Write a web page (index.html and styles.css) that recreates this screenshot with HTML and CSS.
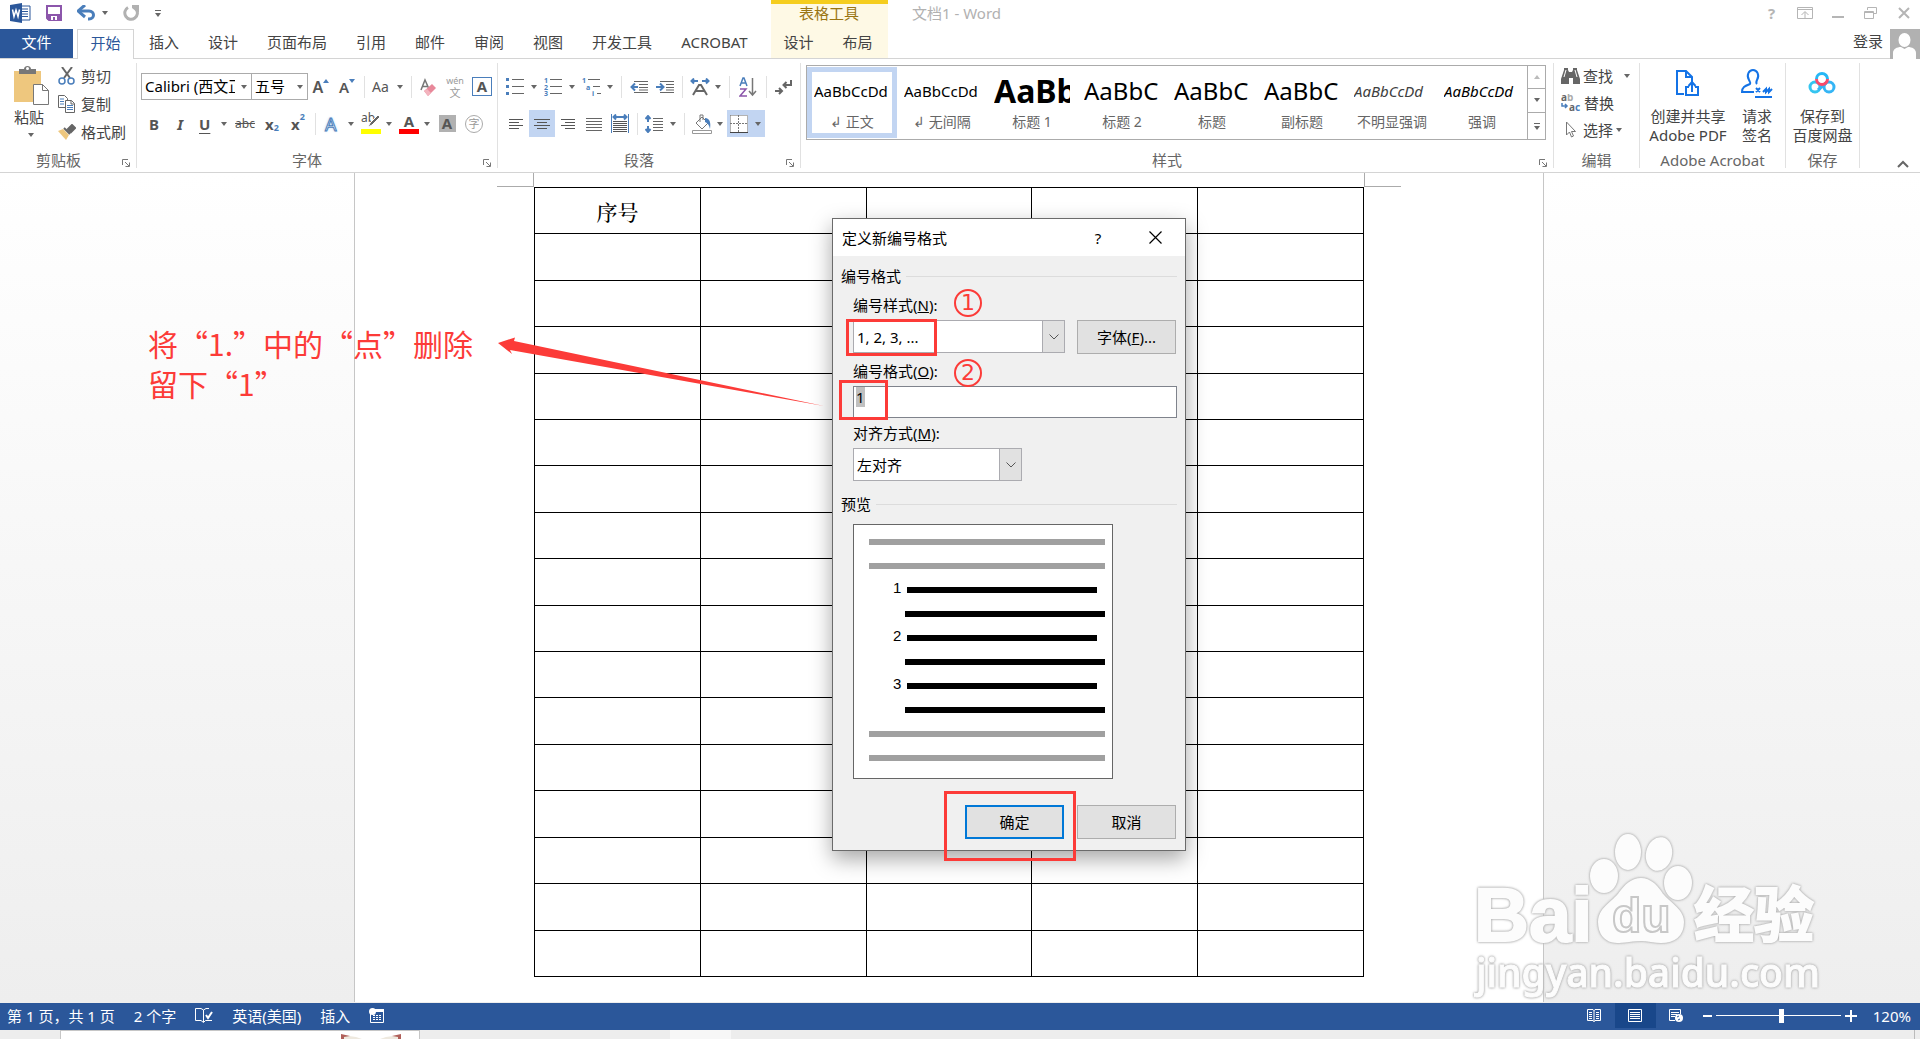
FILE: index.html
```
<!DOCTYPE html>
<html lang="zh-CN">
<head>
    <meta charset="UTF-8">
    <meta name="viewport" content="width=device-width, initial-scale=1.0">
    <link rel="stylesheet" href="styles.css">
    <title>文档1 - Word</title>
</head>
<body>
    <!-- Shared icons -->
    <svg class="defs" width="0" height="0">
        <symbol id="launcher" viewBox="0 0 8 8"><path d="M.5 6V.5H6M3 3l4 4M7.5 3.500v4h-4" fill="none" stroke="#777"/></symbol>
        <symbol id="chevron" viewBox="0 0 10 6"><path d="M.5.5L5 5 9.500.5" fill="none" stroke="#555"/></symbol>
    </svg>

    <!-- Title Bar -->
    <header class="title-bar">
        <div class="quick-access">
            <button class="quick" aria-label="Word"><svg width="21" height="20" viewBox="0 0 21 20"><path d="M9 3h11v14H9z" fill="#fff" stroke="#2b579a"/><path d="M12 6h6M12 8.500h6M12 11h6M12 13.500h6" stroke="#2b579a"/><path d="M0 2l12-2v20L0 18z" fill="#2b579a"/><path d="M2.500 6.500l1.500 7 2-6.500 2 6.500 1.500-7" fill="none" stroke="#fff" stroke-width="1.500"/></svg></button>
            <button class="quick" aria-label="保存"><svg width="16" height="16" viewBox="0 0 16 16"><path d="M1 1h14v14H3l-2-2z" fill="#fff" stroke="#8c56ab" stroke-width="2"/><path d="M1 9h14v6H1z" fill="#8c56ab"/><path d="M5 11h6v4H9v-3H7v3H5z" fill="#fff"/></svg></button>
            <button class="quick undo" aria-label="撤消"><svg width="19" height="16" viewBox="0 0 19 16"><path d="M3 6h9c6 0 6 8 0 8h-1" fill="none" stroke="#4a7ebb" stroke-width="3"/><path d="M8 0L1 6l7 6" fill="none" stroke="#4a7ebb" stroke-width="3"/></svg><i class="caret"></i></button>
            <button class="quick" aria-label="恢复"><svg width="17" height="16" viewBox="0 0 17 16"><path d="M5 2.500A6.300 6.300 0 1 0 13 4" fill="none" stroke="#b1b1b1" stroke-width="3"/><path d="M9 0h7v7h-2l-5-4z" fill="#b1b1b1"/></svg></button>
            <button class="quick more" aria-label="自定义"><i class="caret lined"></i></button>
        </div>
        <h1 class="doc-title">文档1 - Word</h1>
        <div class="window-buttons">
            <button aria-label="帮助">?</button>
            <button aria-label="功能区显示选项"><svg width="16" height="12" viewBox="0 0 16 12"><path d="M.5.5h15v11H.5zM.5 2.500h15M8 11V5M4.500 8L8 4.500 11.500 8" fill="none" stroke="#b5b5b5"/></svg></button>
            <button aria-label="最小化"><svg width="12" height="12" viewBox="0 0 12 12"><path d="M0 10h12" stroke="#b5b5b5" stroke-width="2"/></svg></button>
            <button aria-label="还原"><svg width="13" height="12" viewBox="0 0 13 12"><path d="M3.500 3V.5h9v6h-3M.5 4.500h9v7h-9zM.5 5.500h9" fill="none" stroke="#b5b5b5"/></svg></button>
            <button aria-label="关闭"><svg width="12" height="12" viewBox="0 0 12 12"><path d="M1 1l10 10M11 1L1 11" stroke="#b5b5b5" stroke-width="2"/></svg></button>
        </div>
    </header>

    <!-- Ribbon Tabs -->
    <nav class="tabs">
        <button class="tab file">文件</button>
        <button class="tab active">开始</button>
        <button class="tab">插入</button>
        <button class="tab">设计</button>
        <button class="tab">页面布局</button>
        <button class="tab">引用</button>
        <button class="tab">邮件</button>
        <button class="tab">审阅</button>
        <button class="tab">视图</button>
        <button class="tab">开发工具</button>
        <button class="tab">ACROBAT</button>
        <div class="tool-tabs">
            <span class="tool-title">表格工具</span>
            <button class="tab">设计</button>
            <button class="tab">布局</button>
        </div>
        <a class="sign-in" href="#">登录</a>
        <svg class="avatar" width="30" height="30" viewBox="0 0 30 30"><path d="M0 0h30v30H0z" fill="#b1b1b1"/><ellipse cx="14.500" cy="11" rx="6" ry="7" fill="#fff"/><path d="M3 30v-6c0-4 4-6 8-6l3.500 2 3.500-2c4 0 8 2 8 6v6z" fill="#fff"/></svg>
    </nav>

    <!-- Ribbon -->
    <div class="ribbon">
        <section class="group clipboard">
            <div class="group-body">
                <button class="paste"><svg width="36" height="40" viewBox="0 0 36 40"><path d="M0 5h27v31H0z" fill="#eec77e"/><path d="M5 8V3h5c0-4 7-4 7 0h5v5z" fill="#777"/><circle cx="13.500" cy="2.500" r="1.500" fill="#fff"/><path d="M19.500 18.500h9l6 6v14h-15z" fill="#fff" stroke="#777"/><path d="M28.500 18.500v6h6" fill="none" stroke="#777"/></svg>粘贴<i class="caret"></i></button>
                <div class="small-list">
                    <button><svg width="18" height="18" viewBox="0 0 18 18"><path d="M4 0l8 11M14 0L6 11" stroke="#666" stroke-width="2"/><circle cx="4" cy="14" r="3" fill="none" stroke="#4a7ebb" stroke-width="1.500"/><circle cx="13" cy="14" r="3" fill="none" stroke="#4a7ebb" stroke-width="1.500"/></svg>剪切</button>
                    <button><svg width="18" height="18" viewBox="0 0 18 18"><path d="M.5.5h6l3 3v9h-9z" fill="#fff" stroke="#666"/><path d="M2 4h4M2 6.500h4M2 9h4" stroke="#4a7ebb"/><path d="M7.500 5.500h6l3 3v9h-9z" fill="#fff" stroke="#666"/><path d="M13 5.500V9h3.500" fill="none" stroke="#666"/><path d="M9 10.500h6M9 12.500h6M9 14.500h6" stroke="#4a7ebb"/></svg>复制</button>
                    <button><svg width="18" height="16" viewBox="0 0 18 16"><path d="M0 7l5-2 6 6-3 5z" fill="#eec77e"/><path d="M6 4l6 6M10 5l3 3 4-4-3-3z" fill="#666" stroke="#666" stroke-width="2"/></svg>格式刷</button>
                </div>
            </div>
            <footer><span>剪贴板</span><svg class="launcher" width="8" height="8"><use href="#launcher"/></svg></footer>
        </section>

        <section class="group font">
            <div class="group-body rows">
                <div class="row">
                    <label class="combo font-name"><select aria-label="字体"><option>Calibri (西文正文)</option></select></label>
                    <label class="combo font-size"><select aria-label="字号"><option>五号</option></select></label>
                    <button class="icon"><span class="grow">A</span><svg width="6" height="16" viewBox="0 0 6 16"><path d="M0 4l3-4 3 4z" fill="#4a7ebb"/></svg></button>
                    <button class="icon"><span class="shrink">A</span><svg width="6" height="16" viewBox="0 0 6 16"><path d="M0 0h6L3 4z" fill="#4a7ebb"/></svg></button>
                    <i class="sep"></i>
                    <button class="icon drop"><span class="case">Aa</span><i class="caret"></i></button>
                    <i class="sep"></i>
                    <button class="icon"><svg width="18" height="18" viewBox="0 0 18 18"><path d="M1 12L5 2l4 9M2.500 8.500h5" fill="none" stroke="#777" stroke-width="1.500"/><path d="M4 13l8-7 4 4-8 8z" fill="#e8889a"/><path d="M4 13l3-2 4 4-3 3z" fill="#f3b4be"/></svg></button>
                    <button class="icon phonetic"><small>wén</small><span>文</span></button>
                    <button class="icon wide"><span class="boxed">A</span></button>
                </div>
                <div class="row">
                    <button class="icon"><b>B</b></button>
                    <button class="icon"><b class="italic">I</b></button>
                    <button class="icon drop"><b class="underline">U</b><i class="caret"></i></button>
                    <button class="icon wide"><s>abc</s></button>
                    <button class="icon"><b>x</b><sub>2</sub></button>
                    <button class="icon"><b>x</b><sup>2</sup></button>
                    <i class="sep"></i>
                    <button class="icon drop"><span class="effect">A</span><i class="caret"></i></button>
                    <button class="icon drop"><span class="ink highlight">ab<svg width="18" height="16" viewBox="0 0 18 16"><path d="M7 10l8-8 2 2-8 8-4 2z" fill="#666" stroke="#fff"/></svg></span><i class="caret"></i></button>
                    <button class="icon drop"><span class="ink color">A</span><i class="caret"></i></button>
                    <button class="icon"><span class="shaded">A</span></button>
                    <button class="icon wide"><span class="ring">字</span></button>
                </div>
            </div>
            <footer><span>字体</span><svg class="launcher" width="8" height="8"><use href="#launcher"/></svg></footer>
        </section>

        <section class="group paragraph">
            <div class="group-body rows">
                <div class="row">
                    <button class="icon drop"><svg width="19" height="18" viewBox="0 0 19 18"><path d="M0 0h3v3H0zM0 7h3v3H0zM0 14h3v3H0z" fill="#4a7ebb"/><path d="M6 1.500h12M6 8.500h12M6 15.500h12" stroke="#666"/></svg><i class="caret"></i></button>
                    <button class="icon drop"><svg width="19" height="18" viewBox="0 0 19 18"><g class="tiny"><text x="0" y="5">1</text><text x="0" y="12">2</text><text x="0" y="18">3</text></g><path d="M6 1.500h12M6 8.500h12M6 15.500h12" stroke="#666"/></svg><i class="caret"></i></button>
                    <button class="icon drop"><svg width="19" height="18" viewBox="0 0 19 18"><g class="tiny"><text x="0" y="5">1</text><text x="4" y="12">a</text><text x="10" y="18">i</text></g><path d="M6 1.500h12M11 8.500h7M15 15.500h4" stroke="#666"/></svg><i class="caret"></i></button>
                    <i class="sep"></i>
                    <button class="icon"><svg width="18" height="12" viewBox="0 0 18 12"><path d="M4 .5h14M9 3.500h9M9 6.500h9M4 11.500h14M9 9h9" stroke="#666"/><path d="M8 6H2M5 2.500L1.500 6 5 9.500" fill="none" stroke="#4a7ebb" stroke-width="2"/></svg></button>
                    <button class="icon"><svg width="18" height="12" viewBox="0 0 18 12"><path d="M4 .5h14M10 3.500h8M10 6.500h8M4 11.500h14M10 9h8" stroke="#666"/><path d="M0 6h7M4 2.500L7.500 6 4 9.500" fill="none" stroke="#4a7ebb" stroke-width="2"/></svg></button>
                    <i class="sep"></i>
                    <button class="icon drop"><svg width="20" height="18" viewBox="0 0 20 18"><path d="M3 17l6-10h2l6 10M6 13h8" fill="none" stroke="#666" stroke-width="2"/><path d="M8 3H2M4 .5L1.500 3 4 5.500M12 3h6M16 .5L18.500 3 16 5.500" fill="none" stroke="#4a7ebb" stroke-width="2"/></svg><i class="caret"></i></button>
                    <i class="sep"></i>
                    <button class="icon wide"><svg width="18" height="20" viewBox="0 0 18 20"><path d="M1 9l3-8h1l3 8M2 6h5" fill="none" stroke="#4a7ebb" stroke-width="1.500"/><path d="M1 12h6l-6 7h7" fill="none" stroke="#8c56ab" stroke-width="1.500"/><path d="M13.500 1v16M10 14l3.500 4 3.500-4" fill="none" stroke="#777" stroke-width="1.500"/></svg></button>
                    <i class="sep"></i>
                    <button class="icon"><svg width="18" height="16" viewBox="0 0 18 16"><path d="M16 1v5H9M11.500 3L8.500 6l3 3" fill="none" stroke="#666" stroke-width="2"/><path d="M0 12h7M4 9l3 3-3 3" fill="none" stroke="#666" stroke-width="2"/></svg></button>
                </div>
                <div class="row">
                    <button class="icon"><svg width="14" height="12" viewBox="0 0 14 12"><path d="M0 1.500h14M0 4.500h10M0 7.500h14M0 10.500h10" stroke="#555"/></svg></button>
                    <button class="icon pressed"><svg width="16" height="12" viewBox="0 0 16 12"><path d="M0 1.500h16M3 4.500h10M0 7.500h16M3 10.500h10" stroke="#555"/></svg></button>
                    <button class="icon"><svg width="14" height="12" viewBox="0 0 14 12"><path d="M0 1.500h14M4 4.500h10M0 7.500h14M4 10.500h10" stroke="#555"/></svg></button>
                    <button class="icon"><svg width="16" height="14" viewBox="0 0 16 14"><path d="M0 1.500h16M0 4.500h16M0 7.500h16M0 10.500h16M0 13.500h16" stroke="#666"/></svg></button>
                    <button class="icon"><svg width="18" height="19" viewBox="0 0 18 19"><path d="M.5 0v19M17.500 0v19" stroke="#4a7ebb"/><path d="M3 3h12M5 .5L2.500 3 5 5.500M13 .5L15.500 3 13 5.500" fill="none" stroke="#4a7ebb" stroke-width="2"/><path d="M2 7.500h14M2 9.500h14M2 11.500h14M2 13.500h14M2 15.500h14M2 17.500h14" stroke="#555"/></svg></button>
                    <i class="sep"></i>
                    <button class="icon drop"><svg width="18" height="18" viewBox="0 0 18 18"><path d="M3 2v5M3 11v5M.5 4L3 1l2.500 3M.5 14L3 17l2.500-3" fill="none" stroke="#4a7ebb" stroke-width="2"/><path d="M8 3.500h10M8 6.500h10M8 9.500h10M8 12.500h10M8 15.500h10" stroke="#666"/></svg><i class="caret"></i></button>
                    <i class="sep"></i>
                    <button class="icon drop"><svg width="20" height="20" viewBox="0 0 20 20"><path d="M4 9l6-6 6 6-6 6zM8 8V1h3v5" fill="#fff" stroke="#777"/><path d="M13 4c5 0 6 5 5 11-1-4-2-6-5-7z" fill="#4a7ebb"/><path d="M.5 16.500h19v3H.5z" fill="#fff" stroke="#999"/></svg><i class="caret"></i></button>
                    <button class="icon drop pressed"><svg width="18" height="18" viewBox="0 0 18 18"><path d="M0 0h18v18H0z" fill="#fff"/><path d="M.5.5h17v17M.5.5v17" fill="none" stroke="#666" stroke-dasharray="1 1"/><path d="M0 8.500h18M8.500 0v18" stroke="#777" stroke-dasharray="2 1"/><path d="M0 17.500h18" stroke="#444"/></svg><i class="caret"></i></button>
                </div>
            </div>
            <footer><span>段落</span><svg class="launcher" width="8" height="8"><use href="#launcher"/></svg></footer>
        </section>

        <section class="group styles">
            <div class="group-body">
                <div class="gallery">
                    <button class="style selected"><span class="sample">AaBbCcDd</span><small>↲ 正文</small></button>
                    <button class="style"><span class="sample">AaBbCcDd</span><small>↲ 无间隔</small></button>
                    <button class="style"><span class="sample heading">AaBb</span><small>标题 1</small></button>
                    <button class="style"><span class="sample large">AaBbC</span><small>标题 2</small></button>
                    <button class="style"><span class="sample large">AaBbC</span><small>标题</small></button>
                    <button class="style"><span class="sample large">AaBbC</span><small>副标题</small></button>
                    <button class="style"><span class="sample italic subtle">AaBbCcDd</span><small>不明显强调</small></button>
                    <button class="style"><span class="sample italic">AaBbCcDd</span><small>强调</small></button>
                    <div class="gallery-scroll">
                        <button aria-label="上一行"><i class="caret up"></i></button>
                        <button aria-label="下一行"><i class="caret"></i></button>
                        <button aria-label="其他"><i class="caret lined"></i></button>
                    </div>
                </div>
            </div>
            <footer><span>样式</span><svg class="launcher" width="8" height="8"><use href="#launcher"/></svg></footer>
        </section>

        <section class="group editing">
            <div class="group-body">
                <div class="small-list">
                    <button><svg width="19" height="16" viewBox="0 0 19 16"><path d="M3 2V0h4v2l1 2h3l1-2V0h4v2l3 9v5h-7v-6H8v6H0v-5z" fill="#666"/><path d="M5 2L3 9M14 2l2 7" stroke="#fff"/></svg>查找<i class="caret find"></i></button>
                    <button><svg width="20" height="18" viewBox="0 0 20 18"><g class="letters"><text x="0" y="7">a<tspan class="pale">b</tspan></text><text x="8" y="17">a<tspan class="blue">c</tspan></text></g><path d="M1 9v3h5M4 10l2 2-2 2" fill="none" stroke="#4a7ebb" stroke-width="1.500"/></svg>替换</button>
                    <button><svg width="19" height="17" viewBox="0 0 19 17"><path d="M5.500 1v13l3-3 2 5 2-1-2-4.500h4z" fill="#fff" stroke="#777"/></svg>选择<i class="caret"></i></button>
                </div>
            </div>
            <footer><span>编辑</span></footer>
        </section>

        <section class="group acrobat">
            <div class="group-body">
                <button class="big create"><svg width="26" height="30" viewBox="0 0 26 30"><path d="M9 25H2V2h9l6 6v5M11 2v6h6" fill="none" stroke="#1473e6" stroke-width="2"/><path d="M14 18h-3v8h12v-8h-3M17 23v-9M13.500 17l3.500-4 3.500 4" fill="none" stroke="#1473e6" stroke-width="2"/></svg>创建并共享<br>Adobe PDF</button>
                <button class="big"><svg width="32" height="30" viewBox="0 0 32 30"><path d="M13 23H1c0-5 3-6 8-8 1-1 0-2-1-4-3-5 0-10 4-10s7 5 4 10c-1 2-1 3 0 4" fill="none" stroke="#1473e6" stroke-width="2"/><path d="M15 19l4 4M19 19l-4 4M22 23l3-3v3l3-3v3l3-3M14 28h17" fill="none" stroke="#1473e6" stroke-width="2"/></svg>请求<br>签名</button>
            </div>
            <footer><span>Adobe Acrobat</span></footer>
        </section>

        <section class="group save">
            <div class="group-body">
                <button class="big"><svg width="28" height="30" viewBox="0 0 28 30"><circle cx="7" cy="18" r="5" fill="none" stroke="#35c5f0" stroke-width="3"/><circle cx="21" cy="18" r="5" fill="none" stroke="#35b5f5" stroke-width="3"/><path d="M10 21l8-7" stroke="#35b5f5" stroke-width="3"/><path d="M8.500 10a5.500 5.500 0 0 1 11 0" fill="none" stroke="#27b7f5" stroke-width="3"/><path d="M8.500 10a5.500 5.500 0 0 0 11 0" fill="none" stroke="#fb4b6b" stroke-width="3"/></svg>保存到<br>百度网盘</button>
            </div>
            <footer><span>保存</span></footer>
        </section>
        <button class="collapse" aria-label="折叠功能区"><svg width="12" height="8" viewBox="0 0 12 8"><path d="M1 7l5-5 5 5" fill="none" stroke="#666" stroke-width="2"/></svg></button>
    </div>

    <!-- Document -->
    <main class="workspace">
        <div class="page">
            <div class="margin-marks"><i class="mark left"></i><i class="mark right"></i></div>
            <table class="doc-table">
                <tr><th>序号</th><td></td><td></td><td></td><td></td></tr>
                <tr><td></td><td></td><td></td><td></td><td></td></tr>
                <tr><td></td><td></td><td></td><td></td><td></td></tr>
                <tr><td></td><td></td><td></td><td></td><td></td></tr>
                <tr><td></td><td></td><td></td><td></td><td></td></tr>
                <tr><td></td><td></td><td></td><td></td><td></td></tr>
                <tr><td></td><td></td><td></td><td></td><td></td></tr>
                <tr><td></td><td></td><td></td><td></td><td></td></tr>
                <tr><td></td><td></td><td></td><td></td><td></td></tr>
                <tr><td></td><td></td><td></td><td></td><td></td></tr>
                <tr><td></td><td></td><td></td><td></td><td></td></tr>
                <tr><td></td><td></td><td></td><td></td><td></td></tr>
                <tr><td></td><td></td><td></td><td></td><td></td></tr>
                <tr><td></td><td></td><td></td><td></td><td></td></tr>
                <tr><td></td><td></td><td></td><td></td><td></td></tr>
                <tr><td></td><td></td><td></td><td></td><td></td></tr>
                <tr><td></td><td></td><td></td><td></td><td></td></tr>
            </table>

            <!-- Number Format Dialog -->
            <div class="dialog" role="dialog" aria-labelledby="dialogTitle">
                <div class="dialog-header">
                    <h2 id="dialogTitle">定义新编号格式</h2>
                    <button class="dialog-help">?</button>
                    <button class="dialog-close" aria-label="关闭"><svg width="13" height="13" viewBox="0 0 13 13"><path d="M.5.5l12 12M12.500.5l-12 12" stroke="#000" stroke-width="1.200"/></svg></button>
                </div>
                <div class="dialog-content">
                    <h3>编号格式</h3>
                    <div class="fields">
                        <label for="numberStyle">编号样式(<u>N</u>):</label>
                        <div class="field-row">
                            <div class="select number-style"><select id="numberStyle"><option>1, 2, 3, ...</option></select><svg width="10" height="6"><use href="#chevron"/></svg></div>
                            <button class="dialog-button">字体(<u>F</u>)...</button>
                        </div>
                        <label for="numberFormat">编号格式(<u>O</u>):</label>
                        <input class="number-format" id="numberFormat" type="text" value="1">
                        <label for="alignment">对齐方式(<u>M</u>):</label>
                        <div class="select alignment"><select id="alignment"><option>左对齐</option></select><svg width="10" height="6"><use href="#chevron"/></svg></div>
                    </div>
                    <h3>预览</h3>
                    <div class="preview">
                        <div class="line gray"></div>
                        <div class="line gray"></div>
                        <div class="line first"><span>1</span></div>
                        <div class="line"></div>
                        <div class="line first"><span>2</span></div>
                        <div class="line"></div>
                        <div class="line first"><span>3</span></div>
                        <div class="line"></div>
                        <div class="line gray"></div>
                        <div class="line gray"></div>
                    </div>
                    <div class="dialog-footer">
                        <button class="dialog-button primary">确定</button>
                        <button class="dialog-button">取消</button>
                    </div>
                </div>
                <!-- Annotations on the dialog -->
                <span class="step one">1</span>
                <span class="step two">2</span>
                <i class="frame frame-style"></i>
                <i class="frame frame-format"></i>
                <i class="frame frame-ok"></i>
            </div>

            <p class="note">将“1.”中的“点”删除<br>留下“1”</p>
            <svg class="arrow" width="328" height="72" viewBox="0 0 328 72"><path d="M0 8L17 2.500 16 6l310 65L12 15l2 4z" fill="#fc3b38"/></svg>
        </div>

        <svg class="watermark" width="350" height="170" viewBox="0 0 350 170">
            <text class="wm-bai" x="0" y="110">Bai</text>
            <ellipse cx="130" cy="45" rx="13" ry="16"/>
            <ellipse cx="154" cy="21" rx="12" ry="17"/>
            <ellipse cx="185" cy="23" rx="12" ry="16" transform="rotate(12 185 23)"/>
            <ellipse cx="204" cy="52" rx="13" ry="16"/>
            <path d="M167 48c10 0 16 8 21 15 7 9 21 16 21 28 0 14-9 20-22 20-8 0-12-2-20-2s-16 2-24 2c-12 0-18-9-18-20 0-13 12-18 20-28 6-8 12-15 22-15z"/>
            <text class="wm-du" x="138" y="101">du</text>
            <text class="wm-exp" x="220" y="106">经验</text>
            <text class="wm-url" x="2" y="156">jingyan.baidu.com</text>
        </svg>
    </main>

    <!-- Status Bar -->
    <footer class="status-bar">
        <span>第 1 页，共 1 页</span>
        <span>2 个字</span>
        <svg width="18" height="15" viewBox="0 0 18 15"><path d="M8.500 2L6 .5H.5v12H6l2.500 2 2-2H17M8.500 2v12M8.500 2L11 .5h3" fill="none" stroke="#fff"/><path d="M11 7l2 3 4-6" fill="none" stroke="#fff" stroke-width="2"/></svg>
        <span>英语(美国)</span>
        <span>插入</span>
        <svg width="15" height="15" viewBox="0 0 15 15"><path d="M1.500 5v9.500h13v-12H7" fill="none" stroke="#fff"/><path d="M6 1h9v3H6z" fill="#fff"/><circle cx="3.500" cy="3.500" r="3.500" fill="#fff"/><path d="M4 7.500h9M4 9.500h9M4 11.500h9" stroke="#fff" stroke-dasharray="2 1"/></svg>
        <div class="views">
            <button aria-label="阅读视图"><svg width="14" height="13" viewBox="0 0 14 13"><path d="M.5.5H6l1 1 1-1h5.500v11H8l-1 1-1-1H.5zM7 1v12M2 3.500h3M2 5.500h3M2 7.500h3M2 9.500h3M9 3.500h3M9 5.500h3M9 7.500h3M9 9.500h3" fill="none" stroke="#fff"/></svg></button>
            <button class="current" aria-label="页面视图"><svg width="14" height="13" viewBox="0 0 14 13"><path d="M.5.5h13v12H.5zM2 3.500h10M2 5.500h10M2 7.500h10M2 9.500h10" fill="none" stroke="#fff"/></svg></button>
            <button aria-label="Web 版式视图"><svg width="14" height="13" viewBox="0 0 14 13"><path d="M6 11.500H.5V.5h11V5M2 3.500h8M2 5.500h6M2 7.500h4" fill="none" stroke="#fff"/><circle cx="10" cy="9" r="4" fill="#fff"/><path d="M8 8l2-1M9 11l2-1" stroke="#2b579a"/></svg></button>
        </div>
        <div class="zoom">
            <button class="minus" aria-label="缩小"></button>
            <input type="range" min="0" max="100" value="53" aria-label="缩放">
            <button class="plus" aria-label="放大"></button>
            <span>120%</span>
        </div>
    </footer>

    <!-- Taskbar edge -->
    <div class="taskbar">
        <div class="task"><svg width="62" height="7" viewBox="0 0 62 7"><path d="M2 7V1l14 2 12 4zM60 7V1L46 3 34 7z" fill="#eee9df"/><path d="M1 7V0l9 2-6 1v4zM61 7V0l-9 2 6 1v4z" fill="#b0605a"/></svg></div>
        <div class="task-light"></div>
        <time>21:57</time>
        <i class="desktop-edge"></i>
    </div>

    <script>
        // Start with the number selected so it can be typed over
        document.getElementById("numberFormat").select();
    </script>
</body>
</html>
```
FILE: styles.css
```
/* Base */
* {
    box-sizing: border-box;
}

body {
    margin: 0;
    min-height: 100vh;
    display: flex;
    flex-direction: column;
    font-family: "Noto Sans", "Noto Sans CJK SC", sans-serif;
    font-size: 15px;
    line-height: 20px;
    color: #444;
    background: #fff;
}

button,
select,
input {
    font: inherit;
    color: inherit;
    margin: 0;
    padding: 0;
    border: 0;
    border-radius: 0;
    background: none;
}

h1,
h2,
h3,
p {
    margin: 0;
    font-size: 15px;
    font-weight: normal;
}

button svg,
.status-bar svg {
    display: block;
    flex: none;
}

.defs {
    position: absolute;
}

.caret {
    flex: none;
    width: 0;
    border: 3px solid transparent;
    border-top: 4px solid #666;
    border-bottom: 0;
}

.caret.up {
    border-top: 0;
    border-bottom: 4px solid #bbb;
}

.caret.lined {
    position: relative;
}

.caret.lined::before {
    content: "";
    position: absolute;
    left: -3px;
    top: -7px;
    width: 6px;
    height: 1px;
    background: #666;
}

/* Title Bar */
.title-bar {
    display: flex;
    align-items: center;
    height: 29px;
    padding-bottom: 3px;
}

.quick-access {
    display: flex;
    align-items: center;
    gap: 15px;
    width: 912px;
    padding-left: 10px;
}

.quick {
    display: flex;
    align-items: center;
    gap: 6px;
}

.quick.more {
    padding-top: 4px;
}

.doc-title {
    color: #b1b1b1;
}

.window-buttons {
    display: flex;
    margin-left: auto;
}

.window-buttons button {
    display: flex;
    justify-content: center;
    align-items: center;
    width: 33px;
    height: 24px;
    color: #b5b5b5;
    font-weight: bold;
}

/* Tabs */
.tabs {
    display: flex;
    height: 30px;
    border-bottom: 1px solid #d4d4d4;
}

.tab {
    height: 29px;
    padding: 0 14px 3px 15px;
    white-space: nowrap;
}

.tab.file {
    width: 73px;
    margin-right: 4px;
    padding: 0 14px 3px;
    color: #fff;
    background: #2b579a;
}

.tab.active {
    width: 57px;
    height: 30px;
    padding: 0 0 4px;
    color: #2b579a;
    background: #fff;
    border: 1px solid #d4d4d4;
    border-bottom: 0;
}

.tool-tabs {
    display: flex;
    width: 117px;
    margin-top: -29px;
    margin-left: 9px;
    padding-top: 29px;
    background: #fef9e5;
    position: relative;
}

.tool-tabs .tab:nth-child(2) {
    padding-left: 13px;
}

.tool-title {
    position: absolute;
    inset: 0 0 auto;
    border-top: 4px solid #f5cd1e;
    color: #9a7512;
    text-align: center;
    line-height: 18px;
}

.sign-in {
    margin-left: auto;
    margin-right: 7px;
    line-height: 25px;
    color: #444;
    text-decoration: none;
}

/* Ribbon */
.ribbon {
    display: flex;
    height: 114px;
    padding: 4px 0;
    border-bottom: 1px solid #d4d4d4;
}

.group {
    display: flex;
    flex-direction: column;
    flex: none;
    height: 105px;
    border-right: 1px solid #e1e1e1;
}

.group-body {
    display: flex;
    height: 91px;
}

.group footer {
    position: relative;
    line-height: 12px;
    text-align: center;
    color: #666;
}

.launcher {
    position: absolute;
    right: 6px;
    top: 5px;
}

.clipboard {
    width: 137px;
}

.clipboard footer span {
    padding-right: 19px;
}

.font {
    width: 361px;
}

.paragraph {
    width: 303px;
}

.paragraph footer span,
.font footer span {
    padding-right: 20px;
}

.styles {
    width: 753px;
}

.styles footer span {
    padding-right: 20px;
}

.editing {
    width: 86px;
}

.acrobat {
    width: 146px;
}

.save {
    width: 74px;
}

.paste {
    display: flex;
    flex-direction: column;
    align-items: center;
    width: 58px;
    padding-top: 3px;
    line-height: 22px;
}

.paste svg {
    margin-left: 6px;
}

.paste .caret {
    margin-top: 5px;
    margin-left: 4px;
}

.small-list button {
    display: flex;
    align-items: center;
    gap: 5px;
    height: 28px;
    padding-bottom: 2px;
    white-space: nowrap;
}

.editing .small-list {
    padding-left: 7px;
}

.editing .small-list button {
    height: 27px;
    gap: 3px;
}

.caret.find {
    margin-left: 8px;
}

.letters {
    font-size: 10px;
    font-weight: bold;
    fill: #666;
}

.letters .pale {
    fill: #aaa;
}

.letters .blue {
    fill: #4a7ebb;
}

.rows {
    flex-direction: column;
    gap: 10px;
    padding: 10px 0 0 4px;
}

.row {
    display: flex;
    align-items: center;
    height: 27px;
}

.icon {
    display: flex;
    align-items: center;
    justify-content: center;
    width: 26px;
    height: 27px;
    line-height: 16px;
    color: #555;
}

.icon.wide {
    width: 28px;
}

.icon.drop {
    width: 38px;
    justify-content: space-between;
    padding: 0 4px 0 3px;
}

.icon.drop .underline {
    padding-left: 3px;
}

.paragraph .rows {
    padding-left: 5px;
}

.pressed {
    background: #c2d5f2;
}

.sep {
    width: 1px;
    height: 22px;
    margin: 0 4px;
    background: #e1e1e1;
}

.combo {
    position: relative;
    height: 27px;
    border: 1px solid #ababab;
}

.combo + .combo {
    border-left: 0;
}

.combo select {
    appearance: none;
    width: 100%;
    height: 25px;
    padding: 0 16px 1px 3px;
    color: #000;
    white-space: nowrap;
    overflow: hidden;
}

.combo::after {
    content: "";
    position: absolute;
    right: 4px;
    top: 11px;
    border: 3px solid transparent;
    border-top: 4px solid #666;
    border-bottom: 0;
}

.font-name {
    width: 111px;
}

.font-size {
    width: 56px;
}

.grow,
.shrink {
    font-size: 16px;
    font-weight: 600;
}

.shrink {
    font-size: 15px;
}

.case {
    font-size: 14px;
}

.phonetic {
    flex-direction: column;
    font-size: 11px;
    line-height: 12px;
    color: #999;
}

.phonetic small {
    font-size: 9px;
    line-height: 12px;
}

.boxed {
    width: 20px;
    border: 1px solid #4a7ebb;
    font-weight: bold;
    line-height: 17px;
}

.italic {
    font-style: italic;
}

.underline {
    text-decoration: underline;
    text-underline-offset: 3px;
}

.icon s {
    font-size: 12px;
}

.icon sub,
.icon sup {
    font-size: 9px;
    line-height: 10px;
    color: #4a7ebb;
    font-weight: bold;
}

.icon sub {
    align-self: flex-end;
    margin-bottom: 4px;
}

.icon sup {
    align-self: flex-start;
    margin-top: 2px;
}

.effect {
    padding-left: 2px;
    font-size: 18px;
    color: #fff;
    -webkit-text-stroke: 1px #4a7ebb;
    text-shadow: 0 0 3px #9bc3ec;
}

.ink {
    position: relative;
    width: 20px;
    height: 21px;
    line-height: 16px;
    text-align: center;
    font-weight: bold;
    border-bottom: 5px solid #f00;
}

.highlight {
    font-size: 12px;
    line-height: 10px;
    text-align: left;
    font-weight: normal;
    border-bottom-color: #ff0;
}

.highlight svg {
    position: absolute;
    left: 2px;
    top: 0;
}

.shaded {
    width: 17px;
    height: 17px;
    line-height: 17px;
    font-weight: bold;
    background: #b1b1b1;
}

.ring {
    width: 18px;
    height: 18px;
    border: 1px solid #aaa;
    border-radius: 50%;
    font-size: 11px;
    line-height: 15px;
    color: #999;
}

.tiny {
    font-size: 7px;
    font-weight: bold;
    fill: #4a7ebb;
}

/* Styles gallery */
.gallery {
    display: flex;
    flex: 1;
    height: 75px;
    margin: 2px 7px 0 5px;
    border: 1px solid #ababab;
}

.style {
    display: flex;
    flex-direction: column;
    align-items: center;
    width: 90px;
    height: 71px;
    margin-top: 1px;
    padding: 1px 3px;
    border: 5px solid transparent;
}

.style.selected {
    border-color: #c2d5f2;
}

.sample {
    display: flex;
    align-items: center;
    width: 76px;
    height: 36px;
    margin-bottom: 3px;
    overflow: hidden;
    color: #000;
    white-space: nowrap;
}

.sample.large {
    font-size: 24px;
}

.sample.heading {
    font-size: 32px;
    font-weight: bold;
}

.sample.subtle {
    color: #404040;
}

.style small {
    font-size: 14px;
    line-height: 20px;
    color: #666;
    white-space: nowrap;
}

.gallery-scroll {
    display: flex;
    flex-direction: column;
    width: 18px;
    margin-left: auto;
    border-left: 1px solid #ababab;
}

.gallery-scroll button {
    display: flex;
    align-items: center;
    justify-content: center;
    flex: 1;
}

.gallery-scroll button + button {
    border-top: 1px solid #ababab;
}

.gallery-scroll button:last-child {
    padding-top: 4px;
}

.big {
    display: flex;
    flex-direction: column;
    align-items: center;
    height: 84px;
    padding-top: 6px;
    line-height: 19px;
    white-space: nowrap;
}

.big svg {
    margin-bottom: 8px;
}

.big.create {
    width: 82px;
}

.acrobat .group-body {
    gap: 12px;
    padding-left: 7px;
}

.save .group-body {
    justify-content: center;
}

.collapse {
    align-self: flex-end;
    margin-left: auto;
    margin-right: 11px;
}

/* Workspace */
.workspace {
    position: relative;
    flex: 1;
    padding-right: 22px;
    background: linear-gradient(#fff, #eee);
    overflow: hidden;
}

.page {
    position: relative;
    width: 1190px;
    height: 100%;
    margin: 0 auto;
    padding-bottom: 25px;
    background: #fff;
    border: solid #c6c6c6;
    border-width: 0 1px;
}

.margin-marks {
    display: flex;
    justify-content: space-between;
    height: 14px;
    margin: 0 142px;
}

.mark {
    width: 37px;
    border-bottom: 1px solid #ababab;
}

.mark.left {
    border-right: 1px solid #ababab;
}

.mark.right {
    border-left: 1px solid #ababab;
}

.doc-table {
    width: 830px;
    height: 790px;
    margin: 0 auto;
    border-collapse: collapse;
    table-layout: fixed;
}

.doc-table tr {
    height: 46px;
}

.doc-table td,
.doc-table th {
    padding: 0;
    border: 1px solid #000;
}

.doc-table th {
    font-family: "Noto Serif CJK SC", "Noto Sans CJK SC", serif;
    font-size: 21px;
    font-weight: 500;
    color: #000;
}

/* Dialog */
.dialog {
    position: absolute;
    left: 477px;
    top: 45px;
    width: 354px;
    color: #000;
    background: #f0f0f0;
    border: 1px solid #6b6b6b;
    box-shadow: 0 8px 20px rgba(0, 0, 0, 0.35);
}

.dialog-header {
    display: flex;
    align-items: center;
    height: 37px;
    padding-left: 9px;
    background: #fff;
}

.dialog-header h2 {
    flex: 1;
}

.dialog-help {
    width: 20px;
    margin-right: 41px;
}

.dialog-close {
    margin-right: 23px;
}

.dialog-content {
    padding: 10px 8px 11px;
}

.dialog h3 {
    display: flex;
    align-items: center;
    gap: 5px;
}

.dialog h3::after {
    content: "";
    flex: 1;
    height: 1px;
    background: #dcdcdc;
}

.fields {
    display: flex;
    flex-direction: column;
    align-items: flex-start;
    padding: 9px 0 13px 12px;
}

.fields label {
    margin-bottom: 5px;
}

.field-row {
    display: flex;
    gap: 12px;
    margin-bottom: 7px;
}

.select {
    position: relative;
    height: 33px;
}

.select select {
    appearance: none;
    width: 100%;
    height: 33px;
    padding-left: 3px;
    border: 1px solid #ababb0;
    background: linear-gradient(90deg, #ababb0 1px, #e1e1e1 1px) right / 22px no-repeat #fff;
}

.select svg {
    position: absolute;
    right: 6px;
    top: 14px;
}

.number-style {
    width: 212px;
}

.alignment {
    width: 169px;
}

.number-format {
    width: 324px;
    height: 32px;
    margin-bottom: 5px;
    padding: 0 0 10px 2px;
    border: 1px solid #7f838c;
    background: #fff;
    outline: none;
}

.number-format::selection {
    color: #000;
    background: #c0c0c0;
}

.dialog-button {
    width: 99px;
    height: 34px;
    background: #e1e1e1;
    border: 1px solid #adadad;
}

.dialog-button.primary {
    border: 2px solid #0078d7;
}

.preview {
    display: flex;
    flex-direction: column;
    gap: 18px;
    width: 260px;
    margin: 10px 0 26px 12px;
    padding: 14px 7px 17px 15px;
    background: #fff;
    border: 1px solid #666;
}

.line {
    height: 6px;
    margin-left: 36px;
    background: #000;
}

.line.gray {
    margin-left: 0;
    background: #a0a0a0;
}

.line.first {
    margin-left: 38px;
    margin-right: 8px;
}

.line.first span {
    display: block;
    margin-left: -14px;
    font-family: "Liberation Sans", sans-serif;
    line-height: 2px;
}

.dialog-footer {
    display: flex;
    justify-content: flex-end;
    gap: 13px;
    padding-right: 1px;
}

/* Annotations */
.step {
    position: absolute;
    left: 121px;
    width: 28px;
    height: 28px;
    border: 2px solid #fc3b38;
    border-radius: 50%;
    color: #fc3b38;
    font-family: "DejaVu Sans", sans-serif;
    font-size: 22px;
    line-height: 24px;
    text-align: center;
}

.step.one {
    top: 70px;
}

.step.two {
    top: 140px;
}

.frame {
    position: absolute;
    border: 3px solid #fc3b38;
}

.frame-style {
    left: 13px;
    top: 100px;
    width: 91px;
    height: 37px;
}

.frame-format {
    left: 6px;
    top: 161px;
    width: 49px;
    height: 40px;
}

.frame-ok {
    left: 111px;
    top: 572px;
    width: 132px;
    height: 70px;
}

.note {
    position: absolute;
    left: -207px;
    top: 150px;
    font-family: "Noto Sans CJK SC", sans-serif;
    font-size: 30px;
    line-height: 40px;
    color: #fc3b38;
    white-space: nowrap;
}

.arrow {
    position: absolute;
    left: 143px;
    top: 162px;
}

/* Watermark */
.watermark {
    position: absolute;
    right: 96px;
    bottom: 2px;
    fill: #fcfcfc;
    stroke: #fcfcfc;
    stroke-width: 2px;
    filter: drop-shadow(0 0 1px #aaa) drop-shadow(0 0 1px #ccc);
}

.watermark text {
    font-weight: bold;
}

.wm-bai {
    font-family: "Liberation Sans", sans-serif;
    font-size: 76px;
}

.wm-du {
    font-family: "Liberation Sans", sans-serif;
    font-size: 48px;
    stroke: #c8c8c8;
}

.wm-exp {
    font-family: "Noto Sans CJK SC", sans-serif;
    font-size: 60px;
}

.watermark .wm-url {
    font-size: 39px;
    font-weight: 500;
    stroke-width: 1px;
}

/* Status Bar */
.status-bar {
    display: flex;
    align-items: center;
    gap: 19px;
    height: 27px;
    padding: 0 9px 2px 7px;
    color: #fff;
    background: #2b579a;
}

.views {
    display: flex;
    margin-left: auto;
}

.views button {
    display: flex;
    align-items: center;
    justify-content: center;
    width: 41px;
    height: 25px;
}

.views .current {
    background: #19478a;
}

.zoom {
    display: flex;
    align-items: center;
    gap: 4px;
    margin-left: -13px;
}

.zoom input {
    appearance: none;
    width: 125px;
    height: 16px;
    background: linear-gradient(#fff, #fff) center / 100% 1px no-repeat;
}

.zoom input::-webkit-slider-thumb {
    appearance: none;
    width: 5px;
    height: 14px;
    background: #fff;
}

.zoom .minus {
    width: 9px;
    height: 2px;
    background: #fff;
}

.zoom .plus {
    width: 12px;
    height: 12px;
    background: linear-gradient(#fff, #fff) center / 12px 2px no-repeat, linear-gradient(#fff, #fff) center / 2px 12px no-repeat;
}

.zoom span {
    margin-left: 12px;
}

/* Taskbar edge */
.taskbar {
    display: flex;
    height: 9px;
    background: #ededed;
    overflow: hidden;
}

.task {
    width: 360px;
    margin-left: 60px;
    padding: 3px 0 0 279px;
    line-height: 0;
    background: #fff;
    border: 1px solid #c6c6c6;
    border-bottom: 0;
}

.task-light {
    width: 61px;
    margin-left: 250px;
    background: #f7f7f7;
}

.taskbar time {
    margin-left: auto;
    margin-right: 87px;
    padding-top: 3px;
    color: #000;
}

.desktop-edge {
    width: 6px;
    border-left: 1px solid #bbb;
}
```
